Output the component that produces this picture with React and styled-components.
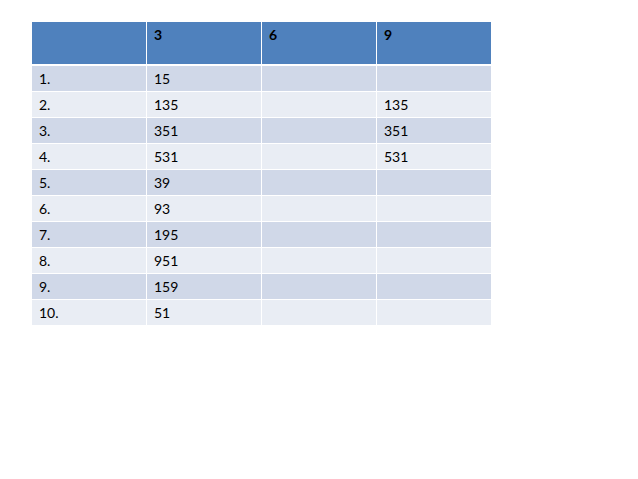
import React from 'react';
import styled, { createGlobalStyle } from 'styled-components';

const GlobalStyle = createGlobalStyle`
  body {
    margin: 0;
    background: #fff;
    font-family: Lato, "Open Sans", "Liberation Sans", sans-serif;
  }
`;

const rows = [
  ['1.', '15', '', ''],
  ['2.', '135', '', '135'],
  ['3.', '351', '', '351'],
  ['4.', '531', '', '531'],
  ['5.', '39', '', ''],
  ['6.', '93', '', ''],
  ['7.', '195', '', ''],
  ['8.', '951', '', ''],
  ['9.', '159', '', ''],
  ['10.', '51', '', ''],
];

export default function App() {
  return (
    <>
      <GlobalStyle />
      <Page>
        <Table>
          <HeaderRow>
            <HeadCell />
            <HeadCell>3</HeadCell>
            <HeadCell>6</HeadCell>
            <HeadCell>9</HeadCell>
          </HeaderRow>
          {rows.map((row, i) => (
            <Row key={i} $odd={i % 2 === 0}>
              {row.map((cell, j) => (
                <Cell key={j}>{cell}</Cell>
              ))}
            </Row>
          ))}
        </Table>
      </Page>
    </>
  );
}

const Page = styled.div`
  padding: 22px 0 0 32px;
  width: 638px;
  height: 479px;
  box-sizing: border-box;
`;

const Table = styled.div`
  display: flex;
  flex-direction: column;
  gap: 1px;
  width: 459px;
`;

const HeaderRow = styled.div`
  display: grid;
  grid-template-columns: repeat(4, 114px);
  column-gap: 1px;
  height: 42px;
  margin-bottom: 1px;
`;

const HeadCell = styled.div`
  background: #4f81bd;
  color: #000;
  font-weight: 700;
  font-size: 14px;
  line-height: 17px;
  padding: 4px 7px 0;
`;

const Row = styled.div`
  display: grid;
  grid-template-columns: repeat(4, 114px);
  column-gap: 1px;
  height: 25px;
  & > div {
    background: ${(p) => (p.$odd ? '#d0d8e8' : '#e9edf4')};
  }
`;

const Cell = styled.div`
  color: #000;
  font-size: 14px;
  padding: 0 7px;
  display: flex;
  align-items: center;
`;
